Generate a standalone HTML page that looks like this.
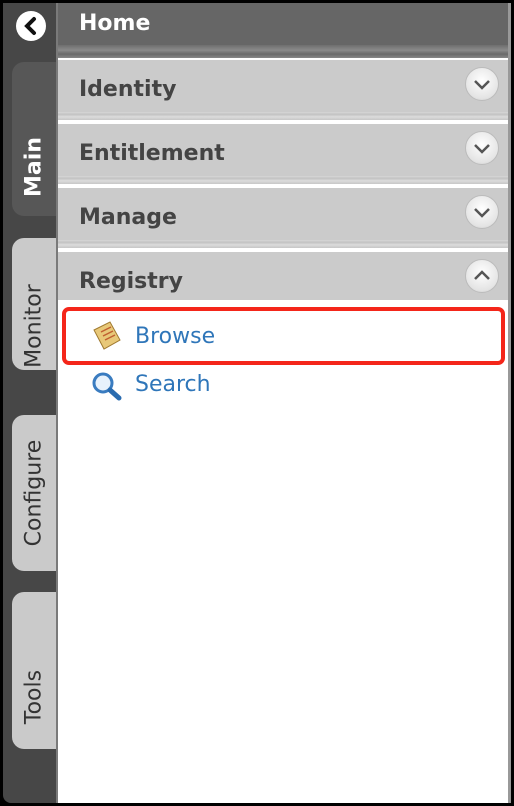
<!DOCTYPE html>
<html><head><style>
*{margin:0;padding:0;box-sizing:border-box}
body{width:514px;height:806px;background:#000;position:relative;overflow:hidden;font-family:"DejaVu Sans","Liberation Sans",sans-serif}
.side{position:absolute;left:3px;top:3px;width:54px;height:800px;background:#474747;border-bottom-left-radius:8px}
.vline{position:absolute;left:56px;top:3px;width:2px;height:800px;background:#7a7a7a}
.content{position:absolute;left:58px;top:3px;width:450px;height:800px;background:#fff}
.rb{position:absolute;left:508px;top:3px;width:3px;height:800px;background:#999}
.tab{position:absolute;left:12px;width:44px;border-radius:12px 0 0 12px;background:#cacaca;overflow:hidden}
.tab span{position:absolute;left:50%;transform:translate(-50%,-50%) rotate(-90deg);white-space:nowrap;font-size:22px;color:#333}
.home{position:absolute;left:58px;top:3px;width:450px;height:42px;background:#666;color:#fff;font-weight:bold;font-size:22px;padding:8px 0 0 21px}
.stripe{position:absolute;left:58px;width:450px}
.sec{position:absolute;left:58px;width:450px;height:62px;background:#cbcbcb;border-top:2px solid #fff;color:#444;font-weight:bold;font-size:22px;padding:17px 0 0 21px}
.sec .bt{position:absolute;left:0;right:0;bottom:0;height:8px;background:linear-gradient(#d8d8d8,#c2c2c2 30%,#dcdcdc 60%,#c6c6c6)}
.chev{position:absolute;right:9px;top:7px;width:34px;height:34px;border-radius:50%;background:radial-gradient(circle at 50% 40%,#fff,#e4e4e4 70%,#bdbdbd);border:1px solid #bbb}
.back{position:absolute;left:16px;top:11px;width:30px;height:30px;border-radius:50%;background:#fff}
.item{position:absolute;left:135px;font-size:22px;color:#2f76b9}
.red{position:absolute;left:62px;top:307px;width:443px;height:58px;border:4px solid #f4261a;border-radius:7px}
</style></head><body>
<div class="side"></div>
<div class="content"></div>
<div class="vline"></div>
<div class="rb"></div>
<div class="back"><svg width="30" height="30"><path d="M18 8 L11 15 L18 22" stroke="#111" stroke-width="4" fill="none" stroke-linecap="round"/></svg></div>
<div class="tab" style="top:62px;height:154px;background:#575757"><span style="top:105px;color:#fff;font-weight:bold">Main</span></div>
<div class="tab" style="top:238px;height:132px"><span style="top:88px">Monitor</span></div>
<div class="tab" style="top:415px;height:156px"><span style="top:78px">Configure</span></div>
<div class="tab" style="top:592px;height:157px"><span style="top:105px">Tools</span></div>
<div class="home">Home</div>
<div class="stripe" style="top:45px;height:13px;background:linear-gradient(#6e6e6e,#8a8a8a 40%,#6a6a6a 70%,#888)"></div>
<div class="sec" style="top:58px">Identity<div class="chev"><svg width="32" height="32"><path d="M9 13 L16 20 L23 13" stroke="#555" stroke-width="2.5" fill="none"/></svg></div><div class="bt"></div></div>
<div class="sec" style="top:122px">Entitlement<div class="chev"><svg width="32" height="32"><path d="M9 13 L16 20 L23 13" stroke="#555" stroke-width="2.5" fill="none"/></svg></div><div class="bt"></div></div>
<div class="sec" style="top:186px">Manage<div class="chev"><svg width="32" height="32"><path d="M9 13 L16 20 L23 13" stroke="#555" stroke-width="2.5" fill="none"/></svg></div><div class="bt"></div></div>
<div class="sec" style="top:250px;height:50px">Registry<div class="chev"><svg width="32" height="32"><path d="M9 19 L16 12 L23 19" stroke="#555" stroke-width="2.5" fill="none"/></svg></div></div>
<div class="red"></div>
<svg style="position:absolute;left:90px;top:320px" width="34" height="32"><path d="M4 10 L20 2 L30 20 L14 29 Z" fill="#e8c878" stroke="#a07a30"/><path d="M11 12 L21 7 M13 16 L23 11 M15 20 L25 15" stroke="#c06030" stroke-width="1.5"/></svg>
<div class="item" style="top:324px">Browse</div>
<svg style="position:absolute;left:90px;top:370px" width="34" height="32"><circle cx="13" cy="13" r="9" fill="#e8f2fc" stroke="#3a7cc0" stroke-width="3"/><path d="M20 20 L29 28" stroke="#2a6cb0" stroke-width="5" stroke-linecap="round"/></svg>
<div class="item" style="top:372px">Search</div>
</body></html>
